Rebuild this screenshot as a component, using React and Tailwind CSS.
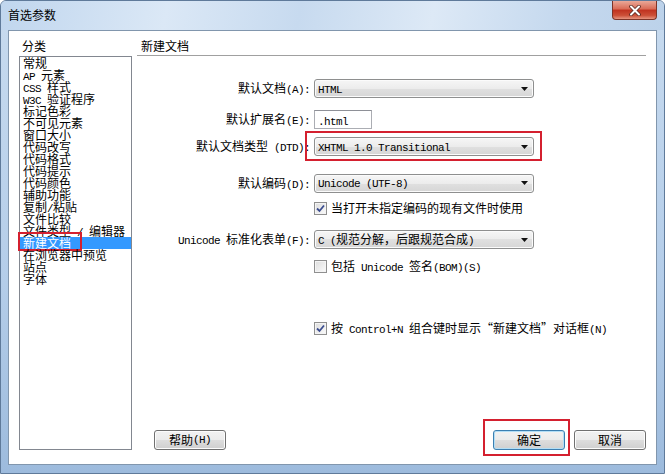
import React from "react";

const items = [
  "常规",
  "AP 元素",
  "CSS 样式",
  "W3C 验证程序",
  "标记色彩",
  "不可见元素",
  "窗口大小",
  "代码改写",
  "代码格式",
  "代码提示",
  "代码颜色",
  "辅助功能",
  "复制/粘贴",
  "文件比较",
  "文件类型 / 编辑器",
  "新建文档",
  "在浏览器中预览",
  "站点",
  "字体",
];

// ascii runs are drawn narrower, like SimSun's half-width latin
function Mixed({ text }) {
  return text.split(/([\x20-\x7e]+)/).map((p, i) =>
    /^[\x20-\x7e]+$/.test(p) ? (
      <span key={i} className="font-['Liberation_Mono',monospace] text-[11px] tracking-[-0.6px]">
        {p}
      </span>
    ) : (
      <React.Fragment key={i}>{p}</React.Fragment>
    )
  );
}

function Select({ value }) {
  return (
    <div className="flex h-[19px] w-[220px] items-center justify-between rounded-[3px] border border-[#8e8f8f] bg-[linear-gradient(to_bottom,#f6f6f6,#ececec_50%,#e0e0e0_50%,#d6d6d6)] pl-[3px] pr-[5px] leading-[17px] shadow-[inset_0_0_0_1px_#fbfbfb]">
      <span className="whitespace-pre">
        <Mixed text={value} />
      </span>
      <svg width="7" height="4" viewBox="0 0 7 4">
        <path d="M0 0h7L3.5 4z" fill="#111" />
      </svg>
    </div>
  );
}

function Check({ checked, label }) {
  return (
    <div className="flex h-[12px] items-center pl-[177px]">
      <div className="flex h-[13px] w-[13px] items-center justify-center border border-[#8f8f8f] bg-[linear-gradient(to_bottom_right,#dcdcdc,#fbfbfb)] shadow-[inset_0_0_0_1px_#f4f4f4]">
        {checked && (
          <svg width="9" height="9" viewBox="0 0 9 9">
            <path d="M1 4.5l2.5 2.5L8 1.5" stroke="#3b4d8f" strokeWidth="1.8" fill="none" />
          </svg>
        )}
      </div>
      <span className="ml-[4px] whitespace-pre leading-[12px]">
        <Mixed text={label} />
      </span>
    </div>
  );
}

function Row({ label, children, className = "" }) {
  return (
    <div className={`flex items-center ${className}`}>
      <div className="w-[173px] whitespace-pre text-right">
        <Mixed text={label} />
      </div>
      <div className="relative ml-[4px]">{children}</div>
    </div>
  );
}

function Button({ label, primary }) {
  return (
    <div
      className={`flex h-[20px] w-[72px] items-center justify-center rounded-[3px] border bg-[linear-gradient(to_bottom,#f2f2f2,#ebebeb_50%,#dddddd_50%,#cfcfcf)] ${
        primary
          ? "border-[#3c7fb1] shadow-[inset_0_0_0_1px_#b2def6]"
          : "border-[#707070] shadow-[inset_0_0_0_1px_#fcfcfc]"
      }`}
    >
      <Mixed text={label} />
    </div>
  );
}

export default function App() {
  return (
    <div className="flex h-[474px] w-[665px] flex-col overflow-hidden rounded-t-[6px] border border-[#5f7a9a] bg-[linear-gradient(to_bottom,#c8dbef,#b4cde9_60%,#9dbbdd)] font-['Noto_Sans_CJK_SC',sans-serif] text-[12px] text-black">
      <div className="flex h-[29px] shrink-0 items-start justify-between bg-[linear-gradient(100deg,#c0d6ee,#dbe8f6_25%,#c7daef_45%,#dde9f6_65%,#c4d8ee_85%,#bcd2ea)] pl-[7px]">
        <div className="mt-[7px] leading-[14px]">首选参数</div>
        <div className="mr-[7px] flex h-[19px] w-[45px] items-center justify-center rounded-b-[4px] border border-t-0 border-[#7d3428] bg-[linear-gradient(to_bottom,#eaa898,#d96a55_45%,#c0321f_50%,#cc5038_80%,#e69580)]">
          <svg width="12" height="11" viewBox="0 0 12 11">
            <path d="M2 1.5l8 8M10 1.5l-8 8" stroke="#5a2a22" strokeWidth="3.6" strokeLinecap="round" />
            <path d="M2 1.5l8 8M10 1.5l-8 8" stroke="#ffffff" strokeWidth="2" strokeLinecap="round" />
          </svg>
        </div>
      </div>

      <div className="mx-[7px] mb-[8px] flex flex-1 border border-[#8196ad] bg-white pb-[14px]">
        <div className="ml-[10px] flex w-[113px] flex-col">
          <div className="h-[25px] pl-[3px] pt-[9px] leading-[12px]">分类</div>
          <div className="h-[394px] border border-[#828790] bg-white">
            {items.map((it) => {
              const sel = it === "新建文档";
              return (
                <div
                  key={it}
                  className={`relative h-[12px] whitespace-pre pl-[3px] leading-[12px] ${
                    sel ? "bg-[#3399ff] text-white" : ""
                  }`}
                >
                  <Mixed text={it} />
                  {sel && (
                    <div className="absolute left-[-2px] top-[-5px] h-[19px] w-[64px] border-2 border-[#d4202f]" />
                  )}
                </div>
              );
            })}
          </div>
        </div>

        <div className="ml-[5px] flex w-[509px] flex-col">
          <div className="h-[25px] border-b border-[#a0a0a0] pl-[4px] pt-[9px] leading-[12px]">新建文档</div>

          <Row label="默认文档(A):" className="mt-[23px]">
            <Select value="HTML" />
          </Row>
          <Row label="默认扩展名(E):" className="mt-[11px]">
            <div className="h-[19px] w-[58px] border border-[#abadb3] border-t-[#8e9097] bg-white pl-[3px] leading-[17px]">
              <Mixed text=".html" />
            </div>
          </Row>
          <Row label="默认文档类型 (DTD):" className="mt-[8px]">
            <Select value="XHTML 1.0 Transitional" />
            <div className="absolute left-[-9px] top-[-6px] h-[30px] w-[237px] border-2 border-[#d4202f]" />
          </Row>
          <Row label="默认编码(D):" className="mt-[17px]">
            <Select value="Unicode (UTF-8)" />
          </Row>
          <div className="mt-[9px]">
            <Check checked label="当打开未指定编码的现有文件时使用" />
          </div>
          <Row label="Unicode 标准化表单(F):" className="mt-[16px]">
            <Select value="C (规范分解，后跟规范合成)" />
          </Row>
          <div className="mt-[11px]">
            <Check label="包括 Unicode 签名(BOM)(S)" />
          </div>
          <div className="mt-[50px]">
            <Check checked label="按 Control+N 组合键时显示“新建文档”对话框(N)" />
          </div>

          <div className="mt-auto flex items-end justify-between">
            <div className="ml-[17px]">
              <Button label="帮助(H)" />
            </div>
            <div className="flex gap-[9px]">
              <div className="relative">
                <Button label="确定" primary />
                <div className="absolute left-[-10px] top-[-11px] h-[37px] w-[87px] border-2 border-[#d4202f]" />
              </div>
              <Button label="取消" />
            </div>
          </div>
        </div>
      </div>
    </div>
  );
}
